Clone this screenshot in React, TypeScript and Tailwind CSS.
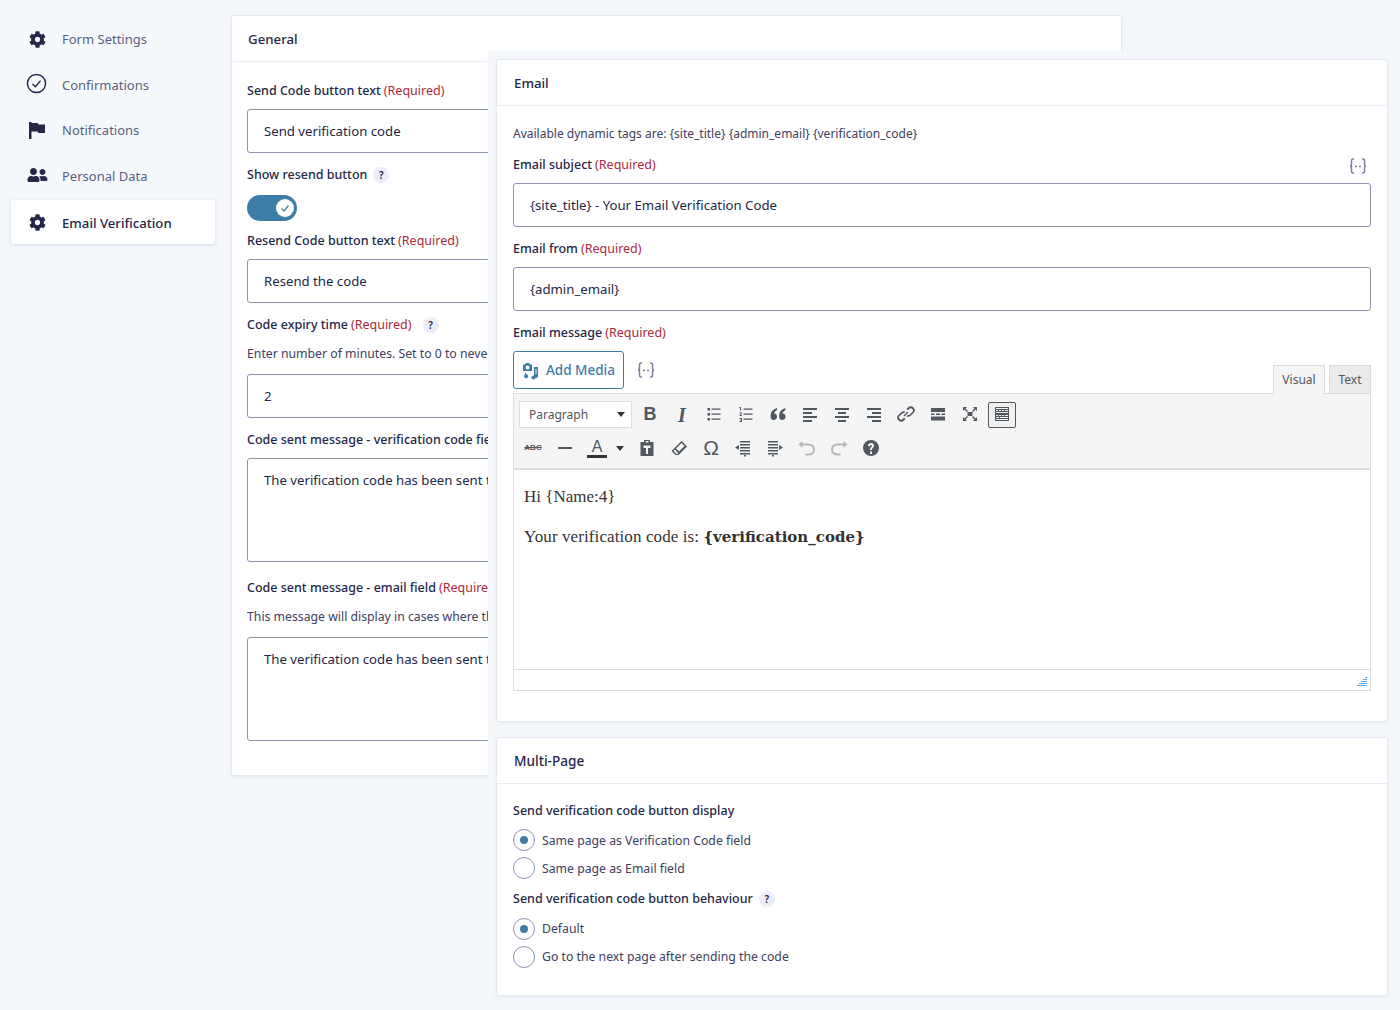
import type { ReactNode } from 'react';
import { FaCog, FaUserFriends } from 'react-icons/fa';

const labelCls = "h-5 pt-[2px] flex items-center text-[12.5px] font-medium text-[#242748] whitespace-nowrap";
const inputCls = "h-11 flex items-center px-4 pt-[2px] border border-[#9092b2] rounded-[3px] bg-white text-[13.2px] text-[#242748] whitespace-nowrap overflow-hidden";
const areaCls = "h-[104px] px-4 pt-3 border border-[#9092b2] rounded-[3px] bg-white text-[13.2px] text-[#242748] whitespace-nowrap overflow-hidden";
const descCls = "h-5 flex items-center text-[12.25px] text-[#3d405e] whitespace-nowrap";

function Required() {
  return <span className="ml-[3px] font-normal text-[#ab2a3c]">(Required)</span>;
}

function Help({ className = '' }: { className?: string }) {
  return (
    <span className={`inline-flex w-4 h-4 items-center justify-center rounded-full bg-[#ecedf8] text-[10px] font-semibold text-[#242748] ${className}`}>?</span>
  );
}

function Braces() {
  return (
    <svg viewBox="0 0 20 18" className="w-5 h-[18px] fill-none stroke-[#7d7fa8]" strokeWidth="1.5">
      <path d="M6 2H5Q3.5 2 3.5 3.5V7Q3.5 9 2 9 3.5 9 3.5 11V14.500Q3.500 16 5 16H6" />
      <path d="M14 2H15Q16.500 2 16.500 3.500V7Q16.500 9 18 9 16.500 9 16.500 11V14.500Q16.500 16 15 16H14" />
      <circle cx="8" cy="9.500" r="1" fill="#7d7fa8" stroke="none" />
      <circle cx="12" cy="9.500" r="1" fill="#7d7fa8" stroke="none" />
    </svg>
  );
}

function Card({ title, className = '', titleCls = 'pl-4 text-[13.25px]', children }: { title: string; className?: string; titleCls?: string; children: ReactNode }) {
  return (
    <section className={`bg-white border border-[#e6e8f2] rounded-[3px] shadow-[0_1px_4px_rgba(18,25,97,0.08)] ${className}`}>
      <h2 className={`h-[46px] flex items-center pt-[2px] border-b border-[#ebebf2] font-medium text-[#242748] ${titleCls}`}>{title}</h2>
      {children}
    </section>
  );
}

function NavItem({ icon, label, active = false }: { icon: ReactNode; label: string; active?: boolean }) {
  return (
    <div className={`flex items-center rounded-[3px] pl-[15px] ${active ? 'h-11 mt-[1px] bg-white shadow-[0_1px_4px_rgba(18,25,97,0.15)] text-[#242748] font-medium' : 'h-[45.5px] text-[#5b5e80]'}`}>
      <span className="w-[22px] flex justify-center text-[#242748]">{icon}</span>
      <span className={`ml-[14px] ${active ? 'pt-[3px] text-[13.2px]' : 'text-[13px]'}`}>{label}</span>
    </div>
  );
}

function Radio({ label, checked = false, textShift = '' }: { label: string; checked?: boolean; textShift?: string }) {
  return (
    <div className="h-7 flex items-center gap-[7px] text-[12.25px] text-[#3d405e]">
      <span className="w-[22px] h-[22px] rounded-full border border-[#9092b2] flex items-center justify-center bg-white">
        {checked && <span className="w-2 h-2 rounded-full bg-[#3e7da6]" />}
      </span>
      <span className={textShift}>{label}</span>
    </div>
  );
}

function Tb({ d, active = false, muted = false, w = 'w-8', children }: { d?: string; active?: boolean; muted?: boolean; w?: string; children?: ReactNode }) {
  return (
    <span className={`${w} h-[26px] flex items-center justify-center shrink-0 ${active ? 'border border-[#50575e] rounded-[2px] bg-[#f0f0f0]' : ''}`}>
      {children ?? (
        <svg viewBox="0 0 20 20" className={`w-5 h-5 ${muted ? 'fill-[#b4b9be]' : 'fill-[#50575e]'}`}>
          <path d={d} />
        </svg>
      )}
    </span>
  );
}

const I = {
  bullets: 'M3.500 4h2.500v2.500H3.500zM7.500 4.500h9v1.200h-9zM3.500 9h2.500v2.500H3.500zM7.500 9.500h9v1.200h-9zM3.500 14h2.500v2.500H3.500zM7.500 14.500h9v1.200h-9z',
  numbers: 'M3.500 3h1.500v3.500H4V4H3.500zM3.500 8.500h2.500v.8L4.500 11H6v1H3.500v-.8L5 9.500H3.500zM3.500 14h2.500v4H3.500v-1h1.500v-.5H4v-.8h1V15H3.500zM7.500 4.500h9v1.200h-9zM7.500 9.500h9v1.200h-9zM7.500 14.500h9v1.200h-9z',
  quote: 'M9 4v2Q6.500 7 6 9.500 9 9.500 9 12.500T6 16 2.500 12Q2.500 6 9 4zM17.500 4v2Q15 7 14.500 9.500 17.500 9.500 17.500 12.500T14.500 16 11 12Q11 6 17.500 4z',
  alignL: 'M3 4h14v2H3zM3 8h9v2H3zM3 12h14v2H3zM3 16h9v2H3z',
  alignC: 'M3 4h14v2H3zM6 8h8v2H6zM3 12h14v2H3zM6 16h8v2H6z',
  alignR: 'M3 4h14v2H3zM8 8h9v2H8zM3 12h14v2H3zM8 16h9v2H8z',
  more: 'M3 4h14v4H3zM3 9.500h3.500v1.500H3zM8 9.500h4v1.500H8zM13.500 9.500H17v1.500h-3.500zM3 12.500h14v4H3z',
  full: 'M3 3h4L5.500 4.500 8 7 7 8 4.500 5.500 3 7zM17 3v4l-1.500-1.500L13 8l-1-1 2.500-2.500L13 3zM3 17v-4l1.500 1.500L7 12l1 1-2.500 2.500L7 17zM17 17h-4l1.500-1.500L12 13l1-1 2.500 2.500L17 13zM7.500 8h5v4h-5z',
  kitchen: 'M3 3h14v14H3zM4 4v1h12V4zM4 6v1h2V6zM7 6v1h2V6zM10 6v1h2V6zM13 6v1h3V6zM4 8v1h12V8zM4 11v1h2v-1zM7 11v1h2v-1zM10 11v1h2v-1zM13 11v1h3v-1zM4 13v1h3v-1zM8 13v1h8v-1zM4 15v1h12v-1z',
  hr: 'M3 9h14v2H3z',
  paste: 'M7 2h6v2h3.500v14h-13V4H7zM8.500 3v1.500h3V3zM6.500 7.500v2.500H9v6h2v-6h2.500V7.500z',
  eraser: 'M12.500 3 18 8.500 9.500 17H6.500L2.500 13zM12.500 5 7 10.500 10 13.500 15.500 8zM6 11.500 4.500 13l3 3h1.300L9 15z',
  outdent: 'M7 3h10v1.500H7zM7 6h10v1.500H7zM2 9.500 6 7v5zM7 9h10v1.500H7zM7 12h10v1.500H7zM7 15h10v1.500H7zM11 17h2v1.500h-2z',
  indent: 'M3 3h10v1.500H3zM3 6h10v1.500H3zM3 9h10v1.500H3zM18 9.500 14 7v5zM3 12h10v1.500H3zM3 15h10v1.500H3zM7 17h2v1.500H7z',
  undo: 'M5.500 3v2.500H11Q18 5.500 18 11.500T11 17.500H8.500v-2H11Q16 15.500 16 11.500T11 7.500H5.500V10L1.500 6.500z',
  redo: 'M14.500 3v2.500H9Q2 5.500 2 11.500T9 17.500h2.500v-2H9Q4 15.500 4 11.500T9 7.500h5.500V10l4-3.500z',
  help: 'M10 2a8 8 0 1 0 0 16 8 8 0 0 0 0-16zM9 13.500h2V16H9zM7 8q0-3 3-3t3 3q0 1.500-1.500 2.300-.5.3-.5 1.700H9q0-2 1-2.800.9-.5.9-1.200 0-1-.9-1t-1 1.500z',
  link: 'M7.500 11.500l4-4 1 1-4 4zM10.500 5l1.500-1.500a3.800 3.800 0 0 1 5.500 5.500L15 11.500a3.800 3.800 0 0 1-4.500.7l1.300-1.300a2 2 0 0 0 2-.5l2.500-2.500a2 2 0 0 0-3-3L12 6.200zM9.500 15l-1.500 1.500a3.800 3.800 0 0 1-5.500-5.500L5 8.500a3.800 3.800 0 0 1 4.500-.7L8.200 9.100a2 2 0 0 0-2 .5l-2.500 2.500a2 2 0 0 0 3 3L8 13.800z',
  media: 'M3 3.500h2L6 2h3l1 1.500h2V10H3zM7.500 4.500a2 2 0 1 0 0 4 2 2 0 0 0 0-4zM14 6h4v9a2 2 0 1 1-1.500-1.900V8H15.500v8.500a2 2 0 1 1-1.500-1.900zM5 11.500l3 3a2 2 0 1 1-3-1z',
};

export default function App() {
  return (
    <div className="relative w-[1400px] h-[1010px] overflow-hidden bg-[#f6f9fc] font-['Noto_Sans',sans-serif]">
      <div className="flex items-start pt-[15px] pl-[11px]">
        {/* Settings nav */}
        <nav className="w-[204px] shrink-0 mt-[2px]">
          <NavItem icon={<FaCog className="w-[17px] h-[17px]" />} label="Form Settings" />
          <NavItem
            icon={
              <svg viewBox="0 0 22 22" className="w-[21px] h-[21px] -ml-[1px] -mt-[4px] fill-none stroke-[#242748]" strokeWidth="1.500">
                <circle cx="11" cy="11" r="9.500" />
                <path d="M6.800 11.500 9.800 14.300 15.200 8" />
              </svg>
            }
            label="Confirmations"
          />
          <NavItem
            icon={
              <svg viewBox="0 0 16 17" className="w-4 h-[17px] fill-[#242748]">
                <path d="M0 0h2.500v17H0zM2.500 1H8.500L9.500 2.500H16V11H9.500L8.500 9.500H2.500z" />
              </svg>
            }
            label="Notifications"
          />
          <NavItem icon={<FaUserFriends className="w-[21px] h-[16px] -mt-[2px]" />} label="Personal Data" />
          <NavItem icon={<FaCog className="w-[17px] h-[17px]" />} label="Email Verification" active />
        </nav>

        {/* General panel, partly hidden by the overlay */}
        <Card title="General" className="ml-4 w-[891px] h-[761px]">
          <div className="px-[15px] pt-[18px]">
            <div className={labelCls}>Send Code button text<Required /></div>
            <div className={`${inputCls} mt-[9px]`}>Send verification code</div>
            <div className={`${labelCls} mt-[11px]`}>Show resend button<Help className="ml-[6px]" /></div>
            <div className="mt-[11px] w-[50px] h-[26px] rounded-full bg-[#3e7da6] flex items-center justify-end pr-[3px]">
              <span className="w-[18px] h-[18px] rounded-full bg-white flex items-center justify-center">
                <svg viewBox="0 0 10 10" className="w-[10px] h-[10px] fill-none stroke-[#3e7da6]" strokeWidth="1.200">
                  <path d="M1.500 5.500 4 8 8.500 2.500" />
                </svg>
              </span>
            </div>
            <div className={`${labelCls} mt-[9px]`}>Resend Code button text<Required /></div>
            <div className={`${inputCls} mt-[9px]`}>Resend the code</div>
            <div className={`${labelCls} mt-[11px]`}>Code expiry time<Required /><Help className="ml-[11px]" /></div>
            <div className={`${descCls} mt-[10px]`}>Enter number of minutes. Set to 0 to never expire the code.</div>
            <div className={`${inputCls} mt-[10px]`}>2</div>
            <div className={`${labelCls} mt-[11px]`}>Code sent message - verification code field<Required /></div>
            <div className={`${areaCls} mt-[9px]`}>The verification code has been sent to your email address.</div>
            <div className={`${labelCls} mt-[15px]`}>Code sent message - email field<Required /></div>
            <div className={`${descCls} mt-[10px]`}>This message will display in cases where the email field is on another page.</div>
            <div className={`${areaCls} mt-[10px]`}>The verification code has been sent to your email address.</div>
          </div>
        </Card>
      </div>

      {/* Overlay column covering the General panel */}
      <div className="absolute left-[488px] top-[51px] right-0 bottom-0 bg-[#f6f9fc] pl-[8px] pt-2 pr-3">
        <Card title="Email" titleCls="pl-[17px] text-[13.25px]" className="h-[663px]">
          <div className="px-4 pt-[17px]">
            <div className="h-5 pt-[2px] flex items-center text-[12px] text-[#3d405e] whitespace-nowrap">Available dynamic tags are: {'{site_title} {admin_email} {verification_code}'}</div>
            <div className={`${labelCls} mt-[11px] justify-between pr-[3px]`}>
              <span>Email subject<Required /></span>
              <span className="mt-[2px]"><Braces /></span>
            </div>
            <div className={`${inputCls} mt-[9px]`}>{'{site_title} - Your Email Verification Code'}</div>
            <div className={`${labelCls} mt-[11px]`}>Email from<Required /></div>
            <div className={`${inputCls} mt-[9px]`}>{'{admin_email}'}</div>
            <div className={`${labelCls} mt-[11px]`}>Email message<Required /></div>

            <div className="mt-[9px] h-[42px] flex items-start">
              <button className="h-[38px] w-[111px] pt-px border border-[#3e7da6] rounded-[3px] bg-white flex items-center justify-center gap-[6px] text-[13.5px] font-medium text-[#3e7da6]">
                <svg viewBox="0 0 20 20" className="w-5 h-5 -ml-[2px] fill-[#3e7da6]"><path d={I.media} /></svg>
                Add Media
              </button>
              <span className="ml-3 mt-[10px]"><Braces /></span>
              <div className="ml-auto mt-[14px] flex items-end text-[12px] text-[#50575e]">
                <span className="h-[29px] w-[52px] flex items-center justify-center bg-[#f5f5f5] border border-[#ddd] border-b-0">Visual</span>
                <span className="h-[29px] w-[42px] ml-1 flex items-center justify-center bg-[#ebebeb] border border-[#ddd]">Text</span>
              </div>
            </div>

            {/* Classic editor */}
            <div className="border border-[#ddd] bg-white">
              <div className="h-[76px] bg-[#f5f5f5] border-b-2 border-[#dcdcde] pt-[7px] pl-[5px]">
                <div className="flex items-center h-[27px] [&_svg]:-translate-y-px">
                  <span className="w-[113px] h-[27px] flex items-center justify-between pl-[9px] pr-[6px] bg-white border border-[#ddd] text-[12px] text-[#50575e]">
                    <span className="pt-px">Paragraph</span>
                    <span className="w-0 h-0 border-x-[4px] border-x-transparent border-t-[5px] border-t-[#32373c]" />
                  </span>
                  <span className="ml-[2px]" />
                  <Tb><span className="font-['Liberation_Sans',sans-serif] text-[18px] font-bold text-[#50575e]">B</span></Tb>
                  <Tb><span className="font-['Liberation_Serif',serif] text-[20px] font-bold italic text-[#50575e]">I</span></Tb>
                  <Tb d={I.bullets} />
                  <Tb d={I.numbers} />
                  <Tb d={I.quote} />
                  <Tb d={I.alignL} />
                  <Tb d={I.alignC} />
                  <Tb d={I.alignR} />
                  <Tb d={I.link} />
                  <Tb d={I.more} />
                  <Tb d={I.full} />
                  <Tb d={I.kitchen} active w="w-7 ml-[2px]" />
                </div>
                <div className="flex items-center h-[26px] mt-[7px] -ml-[2px]">
                  <Tb><span className="font-['Liberation_Sans',sans-serif] text-[8px] font-bold line-through text-[#50575e]">ABC</span></Tb>
                  <Tb d={I.hr} />
                  <Tb>
                    <span className="font-['Liberation_Sans',sans-serif] text-[16px] leading-[17px] text-[#50575e] border-b-[3px] border-[#32373c] w-5 text-center">A</span>
                  </Tb>
                  <span className="w-[14px] flex items-center ml-[3px] mr-[1px]">
                    <span className="w-0 h-0 border-x-[4px] border-x-transparent border-t-[5px] border-t-[#32373c]" />
                  </span>
                  <Tb d={I.paste} />
                  <Tb d={I.eraser} />
                  <Tb><span className="font-['Liberation_Sans',sans-serif] text-[21px] text-[#50575e]">Ω</span></Tb>
                  <Tb d={I.outdent} />
                  <Tb d={I.indent} />
                  <Tb d={I.undo} muted />
                  <Tb d={I.redo} muted />
                  <Tb d={I.help} />
                </div>
              </div>
              <div className="h-[200px] px-[10px] pt-[15px] font-['Liberation_Serif',serif] text-[17px] text-[#333] border-b border-[#ddd]">
                <p className="h-6 leading-6">Hi {'{Name:4}'}</p>
                <p className="mt-4 h-6 leading-6 tracking-[0.1px]">Your verification code is: <strong className="font-['DejaVu_Serif',serif] text-[15px] tracking-normal">{'{verification_code}'}</strong></p>
              </div>
              <div className="h-5 relative">
                <svg viewBox="0 0 10 10" className="absolute right-[3px] bottom-[3px] w-[10px] h-[10px] fill-[#5aa9e6]">
                  <path d="M8 0h2v1H8zM6 2h4v1H6zM4 4h6v1H4zM2 6h8v1H2zM0 8h10v1H0z" />
                </svg>
              </div>
            </div>
          </div>
        </Card>

        <Card title="Multi-Page" titleCls="pl-[17px] text-[13.6px]" className="mt-[15px] h-[259px]">
          <div className="px-4 pt-4">
            <div className={labelCls}>Send verification code button display</div>
            <div className="mt-[6px]">
              <Radio label="Same page as Verification Code field" checked textShift="pt-[3px]" />
              <Radio label="Same page as Email field" textShift="pt-[3px]" />
            </div>
            <div className={`${labelCls} mt-[6px]`}>Send verification code button behaviour<Help className="ml-[6px]" /></div>
            <div className="mt-[7px]">
              <Radio label="Default" checked />
              <Radio label="Go to the next page after sending the code" />
            </div>
          </div>
        </Card>
      </div>
    </div>
  );
}
